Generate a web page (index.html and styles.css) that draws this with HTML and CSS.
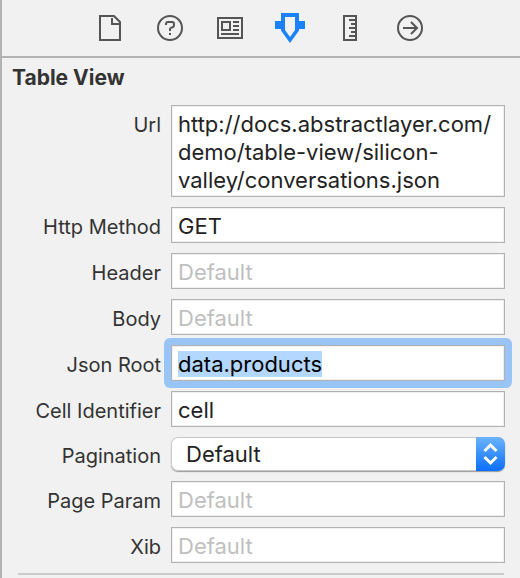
FILE: index.html
```html
<!DOCTYPE html>
<html lang="en">
<head>
<meta charset="utf-8">
<title>Attributes Inspector</title>
<link rel="stylesheet" href="styles.css">
</head>
<body>
<main class="inspector">
  <nav class="tabs" aria-label="Inspectors">
    <button class="tab" type="button" aria-label="File">
      <svg class="icon" viewBox="0 0 32 32"><path d="M6 4H20L26 10V28H6Z"/><path d="M18 6V12H25"/></svg>
    </button>
    <button class="tab" type="button" aria-label="Quick Help">
      <svg class="icon" viewBox="0 0 32 32"><circle cx="16" cy="16" r="12"/><path d="M12 13V12Q12 10 14 10H18Q20 10 20 12V13Q20 15 18 15.500Q16 16 16 17V19M16 21V23"/></svg>
    </button>
    <button class="tab" type="button" aria-label="Identity">
      <svg class="icon" viewBox="0 0 32 32"><path d="M4 6H28V26H4ZM8 10H16V18H8ZM19 10H25M19 14H25M19 18H25M7 22H25"/></svg>
    </button>
    <button class="tab tab-active" type="button" aria-label="Attributes">
      <svg class="icon" viewBox="0 0 32 32"><path class="solid" fill-rule="evenodd" d="M7 1H25V9H31V17H25V18.500L16 31L7 18.500V17H1V9H7ZM11 5V18L16 25L21 18V5Z"/></svg>
    </button>
    <button class="tab" type="button" aria-label="Size">
      <svg class="icon" viewBox="0 0 32 32"><path d="M10 4H22V28H10ZM15 8H22M17 12H22M15 16H22M17 20H22M15 24H22"/></svg>
    </button>
    <button class="tab" type="button" aria-label="Connections">
      <svg class="icon" viewBox="0 0 32 32"><circle cx="16" cy="16" r="12"/><path d="M9 16H23M17 10L23 16L17 22"/></svg>
    </button>
  </nav>
  <form class="section">
    <h1 class="title">Table View</h1>
    <div class="row row-tall">
      <label class="label" for="url">Url</label>
      <textarea class="field area" id="url" rows="3" spellcheck="false">http://docs.abstractlayer.com/demo/table-view/silicon-valley/conversations.json</textarea>
    </div>
    <div class="row">
      <label class="label" for="method">Http Method</label>
      <input class="field" id="method" type="text" value="GET">
    </div>
    <div class="row">
      <label class="label" for="header">Header</label>
      <input class="field" id="header" type="text" placeholder="Default">
    </div>
    <div class="row">
      <label class="label" for="body">Body</label>
      <input class="field" id="body" type="text" placeholder="Default">
    </div>
    <div class="row">
      <label class="label" for="root">Json Root</label>
      <div class="ring">
        <input class="field field-focus" id="root" type="text" value="data.products" spellcheck="false">
      </div>
    </div>
    <div class="row">
      <label class="label" for="cell">Cell Identifier</label>
      <input class="field" id="cell" type="text" value="cell">
    </div>
    <div class="row">
      <label class="label" for="pagination">Pagination</label>
      <div class="popup">
        <select class="select" id="pagination"><option>Default</option></select>
        <span class="stepper" aria-hidden="true">
          <svg class="chevrons" viewBox="0 0 29 34"><path d="M8.500 14L14.500 8L20.500 14M8.500 20L14.500 26L20.500 20"/></svg>
        </span>
      </div>
    </div>
    <div class="row">
      <label class="label" for="param">Page Param</label>
      <input class="field" id="param" type="text" placeholder="Default">
    </div>
    <div class="row">
      <label class="label" for="xib">Xib</label>
      <input class="field" id="xib" type="text" placeholder="Default">
    </div>
    <hr class="rule">
  </form>
</main>
<script src="script.js"></script>
</body>
</html>
```
FILE: styles.css
```css
* {
  box-sizing: border-box;
}

body {
  margin: 0;
  background: #f1f1f1;
  color: #333;
  font-family: Inter, "Liberation Sans", sans-serif;
}

.inspector {
  min-height: 100vh;
  box-shadow: inset 2px 0 #b2b2b2;
}

.tabs {
  display: flex;
  justify-content: center;
  height: 58px;
  border-bottom: 2px solid #b2b2b2;
}

.tab {
  display: flex;
  align-items: center;
  justify-content: center;
  width: 60px;
  padding: 0;
  border: 0;
  background: none;
  color: #555;
}

.tab-active {
  color: #1a82ff;
}

.icon {
  width: 32px;
  height: 32px;
  fill: none;
  stroke: currentColor;
  stroke-width: 2;
}

.solid {
  fill: currentColor;
  stroke: none;
}

.section {
  padding: 6px 15px 4px 12px;
}

.title {
  margin: 0 0 13px;
  font-size: 21px;
  line-height: 28px;
  font-weight: 700;
}

.row {
  display: grid;
  grid-template-columns: 149px 1fr;
  column-gap: 10px;
  align-items: center;
  margin-bottom: 10px;
}

.row-tall {
  align-items: start;
}

.label {
  font-size: 20px;
  line-height: 28px;
  padding-top: 3px;
  text-align: right;
  white-space: nowrap;
}

.row-tall .label {
  padding-top: 6px;
}

.field {
  display: block;
  width: 100%;
  height: 36px;
  margin: 0;
  padding: 4px 6px 2px;
  border: 1px solid #b2b2b2;
  border-radius: 0;
  outline: 0;
  background: #fff;
  box-shadow: inset 0 0 0 1px #f0f0f0;
  color: #222;
  font: 22px/28px Inter, "Liberation Sans", sans-serif;
}

.area {
  height: auto;
  resize: none;
  overflow: hidden;
}

.field::placeholder {
  color: #bfbfbf;
  opacity: 1;
}

.field::selection {
  background: #b3d7ff;
  color: #000;
}

.field-focus {
  caret-color: transparent;
}

.ring {
  margin: -7px;
  padding: 7px;
  border-radius: 6px;
  background: #98c4f6;
}

.popup {
  display: grid;
  grid-template-columns: 1fr 29px;
  height: 34px;
  border-radius: 7px;
  background: #fff;
  box-shadow: inset 0 0 0 1px #c8c8c8, 0 1px 1px #999;
}

.select {
  grid-area: 1 / 1 / 2 / 3;
  width: 100%;
  padding: 0 36px 0 15px;
  border: 0;
  border-radius: 7px;
  outline: 0;
  appearance: none;
  background: transparent;
  color: #222;
  font: 22px/28px Inter, "Liberation Sans", sans-serif;
}

.stepper {
  grid-area: 1 / 2;
  border-radius: 0 7px 7px 0;
  background: linear-gradient(#6bb3fb, #0a6fff);
  pointer-events: none;
}

.chevrons {
  display: block;
  width: 29px;
  height: 34px;
  fill: none;
  stroke: #fff;
  stroke-width: 3;
}

.rule {
  height: 2px;
  margin: 0 1px 0 6px;
  border: 0;
  background: #cbcbcb;
}
```
FILE: script.js
```js
const root = document.getElementById("root");
root.focus();
root.select();
```
